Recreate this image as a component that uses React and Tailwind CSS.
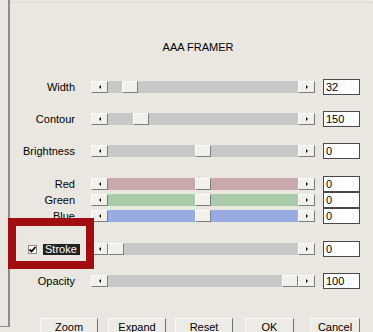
import React from 'react';

const rows = [
  { label: 'Width', value: '32', pos: 14, track: 'bg-[#c8c8c8]', mt: 'mt-[25px]' },
  { label: 'Contour', value: '150', pos: 25, track: 'bg-[#c8c8c8]', mt: 'mt-[16px]' },
  { label: 'Brightness', value: '0', pos: 87, track: 'bg-[#c8c8c8]', mt: 'mt-[16px]' },
  { label: 'Red', value: '0', pos: 87, track: 'bg-[#c9a9aa]', mt: 'mt-[17px]' },
  { label: 'Green', value: '0', pos: 87, track: 'bg-[#a9cba9]', mt: 'mt-0' },
  { label: 'Blue', value: '0', pos: 87, track: 'bg-[#98abe2]', mt: 'mt-0' },
  { label: 'Stroke', value: '0', pos: 0, track: 'bg-[#c8c8c8]', mt: 'mt-[17px]', check: true },
  { label: 'Opacity', value: '100', pos: 174, track: 'bg-[#c8c8c8]', mt: 'mt-[16px]' },
];

const bevel = 'bg-[#f1f0ec] border border-t-white border-l-white border-r-[#7c7c7c] border-b-[#7c7c7c]';

const ArrowButton = ({ dir }) => (
  <div className={`w-[17px] h-full shrink-0 flex items-center justify-center ${bevel}`}>
    {dir === 'left' ? (
      <div className="w-0 h-0 border-y-[2px] border-y-transparent border-r-[2px] border-r-black" />
    ) : (
      <div className="w-0 h-0 border-y-[2px] border-y-transparent border-l-[2px] border-l-black" />
    )}
  </div>
);

const Slider = ({ pos, track }) => (
  <div className="w-[224px] h-[12px] flex">
    <ArrowButton dir="left" />
    <div className={`relative flex-1 h-full ${track}`}>
      <div className={`absolute top-0 w-[16px] h-full ${bevel}`} style={{ left: pos }} />
    </div>
    <ArrowButton dir="right" />
  </div>
);

const Row = ({ row }) => (
  <div className={`flex items-center h-[16px] ${row.mt}`}>
    {row.check ? (
      <div className="w-[81px] flex items-center pl-[18px]">
        <div className="w-[9px] h-[9px] bg-white border border-[#8a8a8a] flex items-center justify-center">
          <svg width="7" height="7" viewBox="0 0 7 7">
            <path d="M0.5 3.5 L2.5 5.5 L6.5 1" stroke="black" strokeWidth="1.8" fill="none" />
          </svg>
        </div>
        <div className="ml-[6px] w-[37px] h-[11px] bg-[#222] text-white leading-[11px] pl-[2px]">{row.label}</div>
      </div>
    ) : (
      <div className="w-[81px] pr-[16px] text-right leading-[13px]">{row.label}</div>
    )}
    <Slider pos={row.pos} track={row.track} />
    <div className="ml-[8px] w-[37px] h-[16px] bg-white border border-[#4a4a4a] leading-[14px] pl-[2px]">
      {row.value}
    </div>
  </div>
);

const buttons = [
  { label: 'Zoom', w: 'w-[58px]', ml: 'ml-[30px]' },
  { label: 'Expand', w: 'w-[58px]', ml: 'ml-[10px]' },
  { label: 'Reset', w: 'w-[58px]', ml: 'ml-[9px]' },
  { label: 'OK', w: 'w-[49px]', ml: 'ml-[12px]' },
  { label: 'Cancel', w: 'w-[50px]', ml: 'ml-[16px]' },
];

export default function App() {
  return (
    <div className="relative w-[373px] h-[332px] overflow-hidden bg-[#e9e7e0] flex text-[11px] text-black font-['Liberation_Sans',Arial,sans-serif]">
      {/* left panel edge */}
      <div className="w-[10px] h-full shrink-0 flex flex-col">
        <div className="w-[10px] h-[327px] border-r-[2px] border-r-[#8e8d88] border-b border-b-[#8e8d88]" />
      </div>

      <div className="flex-1 flex flex-col border-t border-dotted border-[#cfcdc6] mt-[2px]">
        <div className="mt-[37px] h-[14px] text-center leading-[14px] pr-[2px] pl-[15px]">AAA FRAMER</div>

        {rows.map((row) => (
          <Row key={row.label} row={row} />
        ))}

        <div className="flex mt-[29px]">
          {buttons.map((b) => (
            <div
              key={b.label}
              className={`${b.w} ${b.ml} h-[23px] shrink-0 text-center pt-[2px] leading-[13px] bg-[#ecebe6] border border-t-white border-l-[#f8f8f8] border-r-[#6e6e6e] border-b-[#6e6e6e]`}
            >
              {b.label}
            </div>
          ))}
        </div>
      </div>

      {/* highlight frame around Stroke */}
      <div className="absolute left-[8px] top-[218px] w-[86px] h-[51px] border-[8px] border-[#a20d10]" />
    </div>
  );
}
